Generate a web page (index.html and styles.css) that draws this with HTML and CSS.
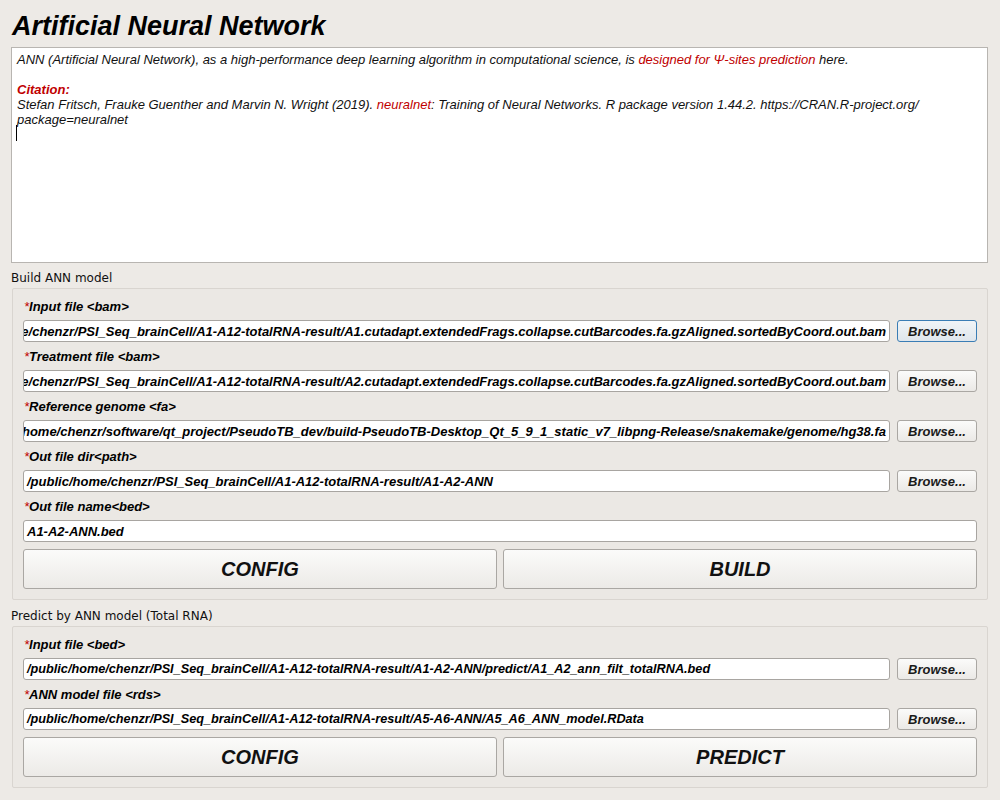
FILE: index.html
```html
<!DOCTYPE html>
<html>
<head>
<meta charset="utf-8">
<link rel="stylesheet" href="styles.css">
</head>
<body>
<div class="app">
  <h1 class="title">Artificial Neural Network</h1>
  <div class="desc">
    <div class="line">ANN (Artificial Neural Network), as a high-performance deep learning algorithm in computational science, is <span class="red">designed for Ψ-sites prediction</span> here.</div>
    <div class="line">&nbsp;</div>
    <div class="line"><span class="red cite">Citation:</span></div>
    <div class="line">Stefan Fritsch, Frauke Guenther and Marvin N. Wright (2019). <span class="red">neuralnet</span>: Training of Neural Networks. R package version 1.44.2. https://CRAN.R-project.org/<br>package=neuralnet</div>
    <div class="line"><span class="cursor"></span></div>
  </div>

  <div class="section-label">Build ANN model</div>
  <div class="group">
    <div class="field">
      <div class="flabel"><span class="star">*</span>Input file &lt;bam&gt;</div>
      <div class="row">
        <div class="input scrolled"><span>/public/home/chenzr/PSI_Seq_brainCell/A1-A12-totalRNA-result/A1.cutadapt.extendedFrags.collapse.cutBarcodes.fa.gzAligned.sortedByCoord.out.bam</span></div>
        <div class="browse focus">Browse...</div>
      </div>
    </div>
    <div class="field">
      <div class="flabel"><span class="star">*</span>Treatment file &lt;bam&gt;</div>
      <div class="row">
        <div class="input scrolled"><span>/public/home/chenzr/PSI_Seq_brainCell/A1-A12-totalRNA-result/A2.cutadapt.extendedFrags.collapse.cutBarcodes.fa.gzAligned.sortedByCoord.out.bam</span></div>
        <div class="browse">Browse...</div>
      </div>
    </div>
    <div class="field">
      <div class="flabel"><span class="star">*</span>Reference genome &lt;fa&gt;</div>
      <div class="row">
        <div class="input scrolled"><span>/public/home/chenzr/software/qt_project/PseudoTB_dev/build-PseudoTB-Desktop_Qt_5_9_1_static_v7_libpng-Release/snakemake/genome/hg38.fa</span></div>
        <div class="browse">Browse...</div>
      </div>
    </div>
    <div class="field">
      <div class="flabel"><span class="star">*</span>Out file dir&lt;path&gt;</div>
      <div class="row">
        <div class="input"><span>/public/home/chenzr/PSI_Seq_brainCell/A1-A12-totalRNA-result/A1-A2-ANN</span></div>
        <div class="browse">Browse...</div>
      </div>
    </div>
    <div class="field">
      <div class="flabel"><span class="star">*</span>Out file name&lt;bed&gt;</div>
      <div class="row">
        <div class="input"><span>A1-A2-ANN.bed</span></div>
      </div>
    </div>
    <div class="actions">
      <div class="bigbtn">CONFIG</div>
      <div class="bigbtn">BUILD</div>
    </div>
  </div>

  <div class="section-label second">Predict by ANN model (Total RNA)</div>
  <div class="group group-predict">
    <div class="field">
      <div class="flabel"><span class="star">*</span>Input file &lt;bed&gt;</div>
      <div class="row">
        <div class="input"><span>/public/home/chenzr/PSI_Seq_brainCell/A1-A12-totalRNA-result/A1-A2-ANN/predict/A1_A2_ann_filt_totalRNA.bed</span></div>
        <div class="browse">Browse...</div>
      </div>
    </div>
    <div class="field">
      <div class="flabel"><span class="star">*</span>ANN model file &lt;rds&gt;</div>
      <div class="row">
        <div class="input"><span>/public/home/chenzr/PSI_Seq_brainCell/A1-A12-totalRNA-result/A5-A6-ANN/A5_A6_ANN_model.RData</span></div>
        <div class="browse">Browse...</div>
      </div>
    </div>
    <div class="actions">
      <div class="bigbtn">CONFIG</div>
      <div class="bigbtn">PREDICT</div>
    </div>
  </div>
</div>
</body>
</html>
```

FILE: styles.css
```css
html, body {
  margin: 0;
  padding: 0;
  background: #edeae6;
}
body {
  width: 1000px;
  height: 800px;
  overflow: hidden;
  font-family: "Liberation Sans", Arial, sans-serif;
  color: #000;
}
.app {
  padding: 9px 12px 0 11px;
}
.title {
  margin: 0 0 4px 1px;
  font-size: 27px;
  line-height: 34px;
  font-weight: bold;
  font-style: italic;
}
.desc {
  background: #fff;
  border: 1px solid #b8b5b1;
  height: 206px;
  padding: 4px 5px 4px 5px;
  font-size: 13px;
  font-style: italic;
  line-height: 15px;
  color: #111;
}
.red {
  color: #c00000;
}
.cite {
  font-weight: bold;
}
.cursor {
  display: inline-block;
  width: 1px;
  height: 16px;
  background: #000;
  margin-left: -1px;
  vertical-align: top;
  margin-top: -2px;
}
.section-label {
  font-family: "DejaVu Sans", sans-serif;
  font-size: 12px;
  line-height: 15px;
  margin: 8px 0 2px 0;
  color: #111;
}
.section-label.second {
  margin: 9px 0 2px 0;
}
.group {
  margin-left: 1px;
  border: 1px solid #d9d5d0;
  border-radius: 2px;
  background: #ebe8e4;
  padding: 9px 10px 10px 10px;
  display: flex;
  flex-direction: column;
  gap: 6px;
}
.field {
  display: flex;
  flex-direction: column;
  gap: 6px;
}
.flabel {
  font-size: 13px;
  height: 16px;
  box-sizing: border-box;
  padding: 2px 0 0 1px;
  line-height: 14px;
  font-weight: bold;
  font-style: italic;
}
.star {
  color: #c00000;
  font-weight: normal;
}
.row {
  display: flex;
  gap: 7px;
  height: 22px;
}
.input {
  flex: 1;
  min-width: 0;
  background: #fff;
  border: 1px solid #a8a5a1;
  border-radius: 3px;
  box-sizing: border-box;
  height: 22px;
  padding: 0 3px 0 3px;
  display: flex;
  align-items: center;
  overflow: hidden;
  white-space: nowrap;
  font-size: 13px;
  font-weight: bold;
  font-style: italic;
}
.group-predict .input {
  font-size: 12.7px;
}
.input span {
  flex: none;
}
.input.scrolled {
  justify-content: flex-end;
}
.browse {
  width: 80px;
  box-sizing: border-box;
  height: 22px;
  border: 1px solid #aaa7a3;
  border-radius: 3px;
  background: linear-gradient(#fbfbfa, #ebe9e6);
  display: flex;
  align-items: center;
  justify-content: center;
  font-size: 13px;
  font-weight: bold;
  font-style: italic;
  color: #1a1a1a;
}
.browse.focus {
  border-color: #3a7db5;
  background: linear-gradient(#f0f4f7, #dfe6ec);
}
.actions {
  display: flex;
  gap: 6px;
  margin-top: 1px;
}
.bigbtn {
  flex: 1;
  height: 40px;
  box-sizing: border-box;
  border: 1px solid #aaa7a3;
  border-radius: 3px;
  background: linear-gradient(#fbfbfa, #eceae7);
  display: flex;
  align-items: center;
  justify-content: center;
  font-size: 20px;
  font-weight: bold;
  font-style: italic;
  color: #111;
}
```
